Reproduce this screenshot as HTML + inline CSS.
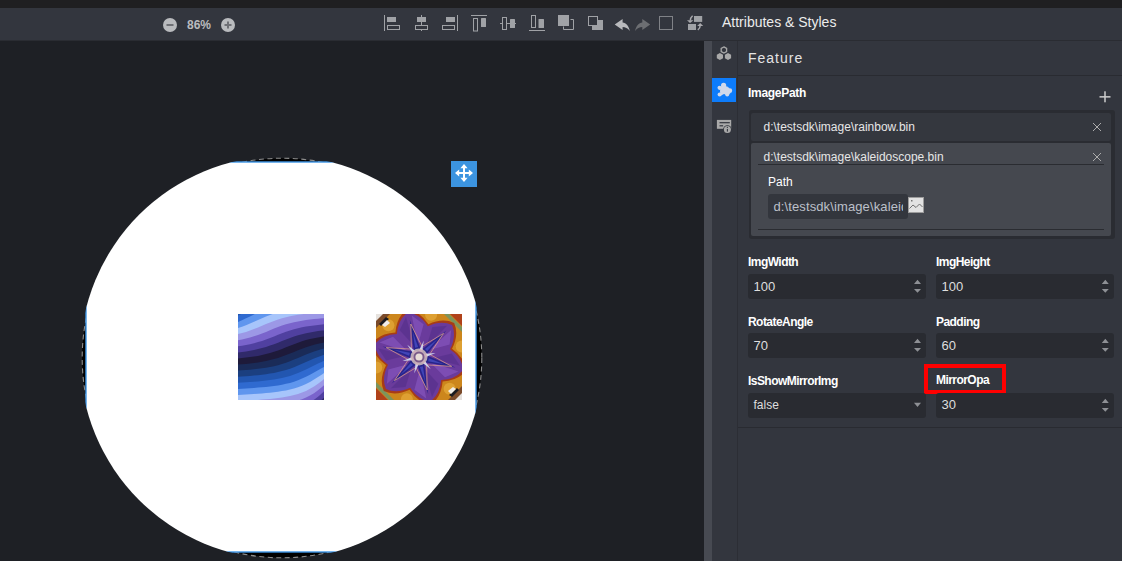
<!DOCTYPE html>
<html><head><meta charset="utf-8">
<style>
*{margin:0;padding:0;box-sizing:border-box}
html,body{width:1122px;height:561px;overflow:hidden;background:#1e2025;font-family:"Liberation Sans",sans-serif}
.abs{position:absolute}
#topbar{left:0;top:0;width:1122px;height:8px;background:#1f1f21}
#toolbar{left:0;top:8px;width:1122px;height:32px;background:#33363e}
#canvas{left:0;top:40px;width:704px;height:521px;background:#1e2025;overflow:hidden}
#sep{left:704px;top:40px;width:8px;height:521px;background:#474a52}
#strip{left:712px;top:40px;width:26px;height:521px;background:#33363e;border-right:1px solid #2c2e35}
#panel{left:738px;top:40px;width:384px;height:521px;background:#33363e}
.t{position:absolute;white-space:nowrap;line-height:1}
svg{position:absolute;overflow:visible}
.lbl{position:absolute;font-size:12px;letter-spacing:-0.55px;font-weight:bold;color:#ffffff;white-space:nowrap;line-height:1}
.inp{position:absolute;height:24.5px;background:#292b31;border-radius:3px}
.inp span{position:absolute;left:5.5px;top:6px;font-size:13px;color:#dedede;line-height:1}
</style></head>
<body>
<div id="topbar" class="abs"></div>
<div id="toolbar" class="abs">
  <!-- zoom controls -->
  <svg style="left:163px;top:10px" width="14" height="14" viewBox="0 0 14 14"><circle cx="7" cy="7" r="7" fill="#b9bbbe"/><rect x="3.5" y="6" width="7" height="2" fill="#6e7075"/></svg>
  <div class="t" style="left:187px;top:11px;font-size:12px;font-weight:bold;color:#b9bbbe">86%</div>
  <svg style="left:221px;top:10px" width="14" height="14" viewBox="0 0 14 14"><circle cx="7" cy="7" r="7" fill="#b9bbbe"/><rect x="3.5" y="6" width="7" height="2" fill="#6e7075"/><rect x="6" y="3.5" width="2" height="7" fill="#6e7075"/></svg>
  <!-- align icons (coords relative to toolbar: y-8) -->
  <svg style="left:0;top:0" width="720" height="32" viewBox="0 0 720 32">
    <g fill="#33363e" stroke="#a0a2a6" stroke-width="1">
      <!-- align left -->
      <line x1="384.5" y1="7" x2="384.5" y2="23"/>
      <rect x="387.5" y="17.5" width="12" height="4"/>
      <!-- align center -->
      <line x1="421.5" y1="7" x2="421.5" y2="23"/>
      <rect x="415.5" y="17.5" width="12" height="4"/>
      <!-- align right -->
      <line x1="457.5" y1="7" x2="457.5" y2="23"/>
      <rect x="442.5" y="17.5" width="12" height="4"/>
      <!-- align top -->
      <line x1="471" y1="7.5" x2="487" y2="7.5"/>
      <rect x="473.5" y="10.5" width="4" height="12.5"/>
      <!-- align middle -->
      <line x1="500" y1="15.5" x2="516" y2="15.5"/>
      <rect x="502.5" y="9.5" width="4" height="12"/>
      <!-- align bottom -->
      <line x1="529" y1="22.5" x2="545" y2="22.5"/>
      <rect x="531.5" y="7.5" width="4" height="12"/>
      <!-- bring front outline L -->
      <path d="M570.5 11.5 H573.5 V21.5 H563.5 V18.5" fill="none"/>
      <!-- send back outline square -->
      <rect x="588.5" y="8.5" width="9" height="9"/>
      
    </g>
    <g fill="#a0a2a6">
      <rect x="387" y="9" width="9" height="5"/>
      <rect x="417" y="9" width="9" height="5"/>
      <rect x="446" y="9" width="9" height="5"/>
      <rect x="481" y="10" width="5" height="9" rx="0.5"/>
      <rect x="510" y="11" width="5" height="9" rx="0.5"/>
      <rect x="538.5" y="11" width="5.5" height="9" rx="0.5"/>
      <rect x="558" y="7" width="11" height="11"/>
      <path d="M592 22 H603 V12 H598 V18 H592 Z"/>
      <!-- swap icon -->
      <rect x="694" y="8" width="8.2" height="5.9"/>
      <rect x="688" y="16" width="8" height="6"/>
    </g>
    <rect x="659.5" y="8.5" width="13" height="13" fill="none" stroke="#808287" stroke-width="1"/>
    <!-- undo -->
    <path d="M614.7 16.4 L622.6 11 V14.5 C626 15 629 18 629.8 23.1 C627.5 20 625.5 19.2 622.6 19.1 V21.9 Z" fill="#b9babd"/>
    <!-- redo -->
    <path d="M650.2 16.4 L642.3 11 V14.5 C638.9 15 635.9 18 635.1 23.1 C637.4 20 639.4 19.2 642.3 19.1 V21.9 Z" fill="#6c6e72"/>
    <!-- swap arrows -->
    <path d="M692.6 7.8 Q690.3 9.8 690.3 12.6" fill="none" stroke="#a9a9ad" stroke-width="1.5"/>
    <path d="M687 12.2 L693.4 12.2 L690 15 Z" fill="#a9a9ad"/>
    <path d="M700.2 17.5 Q700.2 20.3 697.8 21.9" fill="none" stroke="#a9a9ad" stroke-width="1.5"/>
    <path d="M697.2 17.9 L703.2 17.9 L700.2 14.9 Z" fill="#a9a9ad"/>
  </svg>
  <div class="t" style="left:722px;top:7px;font-size:14px;color:#ececec">Attributes &amp; Styles</div>
</div>

<div id="canvas" class="abs">
  <svg style="left:0;top:-40px" width="704" height="561" viewBox="0 0 704 561">
    <defs>
      <clipPath id="mask"><circle cx="281.6" cy="357.4" r="201.6"/></clipPath>
    </defs>
    <circle cx="282" cy="358" r="199.8" fill="#000" stroke="#8c8c8c" stroke-width="1.1" stroke-dasharray="5 3.5"/>
    <g clip-path="url(#mask)"><rect x="86" y="162" width="390" height="390" fill="#fff" stroke="#3d95e6" stroke-width="1.4"/></g>
  </svg>
  <svg style="left:238px;top:274px" width="86" height="86" viewBox="0 0 86 86"><defs><clipPath id="cr"><rect width="86" height="86"/></clipPath></defs><g clip-path="url(#cr)">
<rect width="86" height="86" fill="#1b3f80"/>
<path d="M0 -4.3 L4 -6.9 L8 -9.5 L12 -11.9 L16 -14.1 L20 -16.0 L24 -17.7 L28 -19.1 L32 -20.3 L36 -21.2 L40 -22.0 L44 -22.7 L48 -23.3 L52 -23.7 L56 -24.2 L60 -24.5 L64 -24.9 L68 -25.1 L72 -25.4 L76 -25.7 L80 -25.9 L84 -26.2 L86 -26.3V120H0Z" fill="#2256b0"/>
<path d="M0 1.8 L4 -0.4 L8 -2.6 L12 -4.8 L16 -6.9 L20 -8.9 L24 -10.6 L28 -12.2 L32 -13.5 L36 -14.6 L40 -15.5 L44 -16.3 L48 -16.9 L52 -17.5 L56 -17.9 L60 -18.3 L64 -18.7 L68 -19.0 L72 -19.3 L76 -19.6 L80 -19.8 L84 -20.1 L86 -20.2V120H0Z" fill="#2f6ad0"/>
<path d="M0 7.9 L4 6.2 L8 4.3 L12 2.4 L16 0.4 L20 -1.5 L24 -3.3 L28 -5.0 L32 -6.4 L36 -7.7 L40 -8.7 L44 -9.6 L48 -10.4 L52 -11.1 L56 -11.6 L60 -12.1 L64 -12.5 L68 -12.8 L72 -13.1 L76 -13.4 L80 -13.7 L84 -14.0 L86 -14.1V120H0Z" fill="#5f96ee"/>
<path d="M0 14.0 L4 12.7 L8 11.2 L12 9.5 L16 7.8 L20 6.0 L24 4.2 L28 2.5 L32 0.9 L36 -0.5 L40 -1.8 L44 -2.8 L48 -3.7 L52 -4.5 L56 -5.2 L60 -5.7 L64 -6.2 L68 -6.6 L72 -7.0 L76 -7.3 L80 -7.6 L84 -7.9 L86 -8.0V120H0Z" fill="#a7c5fb"/>
<path d="M0 20.1 L4 19.1 L8 17.9 L12 16.6 L16 15.1 L20 13.5 L24 11.8 L28 10.1 L32 8.5 L36 6.9 L40 5.5 L44 4.3 L48 3.2 L52 2.2 L56 1.4 L60 0.7 L64 0.2 L68 -0.3 L72 -0.8 L76 -1.1 L80 -1.5 L84 -1.8 L86 -1.9V120H0Z" fill="#9c98e6"/>
<path d="M0 26.2 L4 25.4 L8 24.5 L12 23.5 L16 22.3 L20 20.9 L24 19.4 L28 17.9 L32 16.2 L36 14.6 L40 13.1 L44 11.6 L48 10.3 L52 9.2 L56 8.2 L60 7.4 L64 6.7 L68 6.1 L72 5.5 L76 5.1 L80 4.7 L84 4.3 L86 4.2V120H0Z" fill="#7a64cc"/>
<path d="M0 32.3 L4 31.7 L8 31.0 L12 30.2 L16 29.2 L20 28.1 L24 26.9 L28 25.5 L32 24.0 L36 22.4 L40 20.8 L44 19.3 L48 17.8 L52 16.5 L56 15.3 L60 14.2 L64 13.3 L68 12.6 L72 11.9 L76 11.4 L80 10.9 L84 10.5 L86 10.3V120H0Z" fill="#5040a0"/>
<path d="M0 38.4 L4 37.9 L8 37.4 L12 36.7 L16 36.0 L20 35.1 L24 34.1 L28 32.9 L32 31.6 L36 30.2 L40 28.7 L44 27.1 L48 25.5 L52 24.0 L56 22.6 L60 21.3 L64 20.2 L68 19.2 L72 18.4 L76 17.7 L80 17.1 L84 16.6 L86 16.4V120H0Z" fill="#302a6a"/>
<path d="M0 44.5 L4 44.1 L8 43.6 L12 43.1 L16 42.6 L20 41.9 L24 41.1 L28 40.1 L32 39.0 L36 37.8 L40 36.4 L44 34.9 L48 33.3 L52 31.7 L56 30.2 L60 28.7 L64 27.3 L68 26.1 L72 25.1 L76 24.2 L80 23.4 L84 22.7 L86 22.5V120H0Z" fill="#1e1a3a"/>
<path d="M0 50.5 L4 50.2 L8 49.9 L12 49.4 L16 49.0 L20 48.4 L24 47.8 L28 47.0 L32 46.1 L36 45.1 L40 43.9 L44 42.6 L48 41.1 L52 39.5 L56 37.9 L60 36.3 L64 34.7 L68 33.3 L72 31.9 L76 30.8 L80 29.8 L84 28.9 L86 28.5V120H0Z" fill="#1a2b58"/>
<path d="M0 56.6 L4 56.3 L8 56.0 L12 55.7 L16 55.3 L20 54.8 L24 54.3 L28 53.7 L32 53.0 L36 52.2 L40 51.2 L44 50.0 L48 48.7 L52 47.2 L56 45.6 L60 43.9 L64 42.2 L68 40.6 L72 39.0 L76 37.6 L80 36.3 L84 35.1 L86 34.6V120H0Z" fill="#1b3f80"/>
<path d="M0 62.7 L4 62.5 L8 62.2 L12 61.9 L16 61.5 L20 61.2 L24 60.7 L28 60.2 L32 59.6 L36 58.9 L40 58.1 L44 57.1 L48 56.0 L52 54.7 L56 53.2 L60 51.6 L64 49.8 L68 48.0 L72 46.2 L76 44.5 L80 42.9 L84 41.4 L86 40.7V120H0Z" fill="#2256b0"/>
<path d="M0 68.8 L4 68.6 L8 68.3 L12 68.0 L16 67.7 L20 67.4 L24 67.0 L28 66.6 L32 66.1 L36 65.5 L40 64.8 L44 64.0 L48 63.1 L52 61.9 L56 60.6 L60 59.0 L64 57.3 L68 55.5 L72 53.5 L76 51.5 L80 49.5 L84 47.7 L86 46.8V120H0Z" fill="#2f6ad0"/>
<path d="M0 74.9 L4 74.7 L8 74.4 L12 74.2 L16 73.9 L20 73.6 L24 73.2 L28 72.9 L32 72.4 L36 72.0 L40 71.4 L44 70.7 L48 69.8 L52 68.9 L56 67.7 L60 66.3 L64 64.6 L68 62.8 L72 60.8 L76 58.6 L80 56.3 L84 54.0 L86 52.9V120H0Z" fill="#5f96ee"/>
<path d="M0 81.0 L4 80.8 L8 80.5 L12 80.3 L16 80.0 L20 79.7 L24 79.4 L28 79.1 L32 78.7 L36 78.3 L40 77.8 L44 77.1 L48 76.4 L52 75.6 L56 74.5 L60 73.2 L64 71.7 L68 69.9 L72 67.9 L76 65.6 L80 63.0 L84 60.4 L86 59.0V120H0Z" fill="#a7c5fb"/>
<path d="M0 87.1 L4 86.9 L8 86.6 L12 86.4 L16 86.1 L20 85.9 L24 85.6 L28 85.3 L32 84.9 L36 84.5 L40 84.0 L44 83.5 L48 82.8 L52 82.1 L56 81.1 L60 80.0 L64 78.6 L68 76.9 L72 74.8 L76 72.4 L80 69.7 L84 66.7 L86 65.1V120H0Z" fill="#9c98e6"/>
<path d="M0 93.2 L4 93.0 L8 92.7 L12 92.5 L16 92.2 L20 92.0 L24 91.7 L28 91.4 L32 91.1 L36 90.7 L40 90.3 L44 89.8 L48 89.2 L52 88.4 L56 87.6 L60 86.5 L64 85.2 L68 83.6 L72 81.6 L76 79.2 L80 76.3 L84 73.0 L86 71.2V120H0Z" fill="#7a64cc"/>
<path d="M0 99.3 L4 99.1 L8 98.8 L12 98.6 L16 98.4 L20 98.1 L24 97.8 L28 97.5 L32 97.2 L36 96.9 L40 96.4 L44 96.0 L48 95.4 L52 94.7 L56 93.9 L60 92.9 L64 91.6 L68 90.1 L72 88.1 L76 85.7 L80 82.8 L84 79.3 L86 77.3V120H0Z" fill="#5040a0"/>
<path d="M0 105.4 L4 105.1 L8 104.9 L12 104.7 L16 104.4 L20 104.2 L24 103.9 L28 103.6 L32 103.3 L36 103.0 L40 102.6 L44 102.1 L48 101.6 L52 100.9 L56 100.2 L60 99.2 L64 98.0 L68 96.5 L72 94.6 L76 92.2 L80 89.2 L84 85.5 L86 83.4V120H0Z" fill="#302a6a"/>
</g></svg>
  <svg style="left:376px;top:274px" width="86" height="86" viewBox="0 0 86 86"><defs><clipPath id="ck"><rect width="86" height="86"/></clipPath></defs><g clip-path="url(#ck)">
<rect width="86" height="86" fill="#cc861c"/>
<circle cx="85.7" cy="32.4" r="6" fill="#dea032"/>
<circle cx="73.6" cy="74.7" r="6" fill="#dea032"/>
<circle cx="30.9" cy="85.3" r="6" fill="#dea032"/>
<circle cx="0.3" cy="53.6" r="6" fill="#dea032"/>
<circle cx="12.4" cy="11.3" r="6" fill="#dea032"/>
<circle cx="55.1" cy="0.7" r="6" fill="#dea032"/>
<path d="M0 0 H14 L0 14Z" fill="#7a4a2a"/>
<path d="M0 0 H7 L0 7Z" fill="#e6e2de"/><path d="M3 10 L10 3 L13 5 L5 12Z" fill="#1a1a20"/><path d="M6 11 L11 6 L14 9 L9 13Z" fill="#f0ece8"/>
<path d="M86 86 H72 L86 72Z" fill="#7a4a2a"/>
<path d="M86 86 H79 L86 79Z" fill="#e6e2de"/><path d="M83 76 L76 83 L73 81 L81 74Z" fill="#1a1a20"/><path d="M80 75 L75 80 L72 77 L77 73Z" fill="#f0ece8"/>
<path d="M86 0 H74 L86 12Z" fill="#b0421a"/><path d="M0 86 H12 L0 74Z" fill="#b0421a"/>
<path d="M68 0 H73 L86 13 V18Z" fill="#5a9a78" opacity="0.7"/><path d="M18 86 H13 L0 73 V68Z" fill="#5a9a78" opacity="0.7"/>
<path d="M52.4 10.3 Q66.7 3.6 78.2 9.0 Q83.2 20.7 76.0 34.8 Q89.0 43.8 90.1 56.5 Q82.4 66.7 66.6 67.5 Q65.3 83.2 54.9 90.5 Q42.2 89.0 33.6 75.7 Q19.3 82.4 7.8 77.0 Q2.8 65.3 10.0 51.2 Q-3.0 42.2 -4.1 29.5 Q3.6 19.3 19.4 18.5 Q20.7 2.8 31.1 -4.5 Q43.8 -3.0 52.4 10.3Z" fill="#a83c16"/>
<path d="M51.8 12.2 Q65.2 6.0 76.1 11.0 Q80.8 22.1 74.0 35.3 Q86.2 43.8 87.2 55.7 Q80.0 65.2 65.2 66.0 Q63.9 80.8 54.1 87.6 Q42.2 86.2 34.2 73.8 Q20.8 80.0 9.9 75.0 Q5.2 63.9 12.0 50.7 Q-0.2 42.2 -1.2 30.3 Q6.0 20.8 20.8 20.0 Q22.1 5.2 31.9 -1.6 Q43.8 -0.2 51.8 12.2Z" fill="#6a3b9c"/>
<path d="M54.9 35.6 L73.6 30.6 L75.2 16.0 L60.3 29.5Z" fill="#8656bd" opacity="0.7"/>
<path d="M50.8 31.4 L56.4 12.9 L71.1 11.8 L57.1 26.1Z" fill="#57318c" opacity="0.7"/>
<path d="M55.4 49.6 L69.0 63.3 L82.5 57.4 L63.4 51.2Z" fill="#8656bd" opacity="0.7"/>
<path d="M57.0 44.0 L75.8 39.6 L84.1 51.7 L64.7 46.8Z" fill="#57318c" opacity="0.7"/>
<path d="M43.5 57.0 L38.4 75.7 L50.3 84.4 L46.1 64.8Z" fill="#8656bd" opacity="0.7"/>
<path d="M49.1 55.6 L62.4 69.7 L56.0 82.9 L50.5 63.7Z" fill="#57318c" opacity="0.7"/>
<path d="M31.1 50.4 L12.4 55.4 L10.8 70.0 L25.7 56.5Z" fill="#8656bd" opacity="0.7"/>
<path d="M35.2 54.6 L29.6 73.1 L14.9 74.2 L28.9 59.9Z" fill="#57318c" opacity="0.7"/>
<path d="M30.6 36.4 L17.0 22.7 L3.5 28.6 L22.6 34.8Z" fill="#8656bd" opacity="0.7"/>
<path d="M29.0 42.0 L10.2 46.4 L1.9 34.3 L21.3 39.2Z" fill="#57318c" opacity="0.7"/>
<path d="M42.5 29.0 L47.6 10.3 L35.7 1.6 L39.9 21.2Z" fill="#8656bd" opacity="0.7"/>
<path d="M36.9 30.4 L23.6 16.3 L30.0 3.1 L35.5 22.3Z" fill="#57318c" opacity="0.7"/>
<path d="M46.7 34.8 L70.3 16.6 L51.3 39.6 L46.6 39.5Z" fill="#27248a"/>
<path d="M49.0 35.0 L61.7 24.9 L51.2 37.3Z" fill="#4244b8"/>
<path d="M52.0 42.1 L79.5 53.5 L50.1 48.5 L47.8 44.4Z" fill="#27248a"/>
<path d="M52.9 44.2 L68.0 50.2 L52.1 47.2Z" fill="#4244b8"/>
<path d="M48.3 50.3 L52.2 79.9 L41.7 51.9 L44.2 47.9Z" fill="#27248a"/>
<path d="M46.9 52.2 L49.3 68.2 L43.9 53.0Z" fill="#4244b8"/>
<path d="M39.3 51.2 L15.7 69.4 L34.7 46.4 L39.4 46.5Z" fill="#27248a"/>
<path d="M37.0 51.0 L24.3 61.1 L34.8 48.7Z" fill="#4244b8"/>
<path d="M34.0 43.9 L6.5 32.5 L35.9 37.5 L38.2 41.6Z" fill="#27248a"/>
<path d="M33.1 41.8 L18.0 35.8 L33.9 38.8Z" fill="#4244b8"/>
<path d="M37.7 35.7 L33.8 6.1 L44.3 34.1 L41.8 38.1Z" fill="#27248a"/>
<path d="M39.1 33.8 L36.7 17.8 L42.1 33.0Z" fill="#4244b8"/>
<path d="M46.0 32.4 L67.5 19.4 L53.7 40.3" fill="none" stroke="#e8a888" stroke-width="0.8" opacity="0.85"/>
<path d="M53.7 40.3 L75.7 52.4 L50.6 50.9" fill="none" stroke="#e8a888" stroke-width="0.8" opacity="0.85"/>
<path d="M50.6 50.9 L51.2 76.0 L40.0 53.6" fill="none" stroke="#e8a888" stroke-width="0.8" opacity="0.85"/>
<path d="M40.0 53.6 L18.5 66.6 L32.3 45.7" fill="none" stroke="#e8a888" stroke-width="0.8" opacity="0.85"/>
<path d="M32.3 45.7 L10.3 33.6 L35.4 35.1" fill="none" stroke="#e8a888" stroke-width="0.8" opacity="0.85"/>
<path d="M35.4 35.1 L34.8 10.0 L46.0 32.4" fill="none" stroke="#e8a888" stroke-width="0.8" opacity="0.85"/>
<path d="M50.3 39.7 L59.5 38.9 L51.0 42.4Z" fill="#cdd3ec"/>
<path d="M49.5 47.7 L54.8 55.2 L47.5 49.6Z" fill="#cdd3ec"/>
<path d="M42.2 51.0 L38.3 59.3 L39.5 50.2Z" fill="#cdd3ec"/>
<path d="M35.7 46.3 L26.5 47.1 L35.0 43.6Z" fill="#cdd3ec"/>
<path d="M36.5 38.3 L31.2 30.8 L38.5 36.4Z" fill="#cdd3ec"/>
<path d="M43.8 35.0 L47.7 26.7 L46.5 35.8Z" fill="#cdd3ec"/>
<circle cx="43" cy="43" r="8.5" fill="#f6e0c8" opacity="0.7"/>
<circle cx="43" cy="43" r="5.5" fill="#7a5a8a"/>
<circle cx="43" cy="43" r="3.6" fill="#e8dcd8"/>
</g></svg>
  <!-- move handle -->
  <svg style="left:451px;top:121px" width="26" height="26" viewBox="0 0 26 26">
    <rect x="0" y="0" width="26" height="26" fill="#3c94e0"/>
    <g fill="#fff">
      <rect x="12" y="5" width="2" height="15"/>
      <rect x="5" y="11" width="16" height="2"/>
      <path d="M13 3 L16.6 7.2 H9.4 Z"/>
      <path d="M13 21 L16.6 16.8 H9.4 Z"/>
      <path d="M4 12 L8.2 8.4 V15.6 Z"/>
      <path d="M22 12 L17.8 8.4 V15.6 Z"/>
    </g>
  </svg>
</div>
<div id="sep" class="abs"></div>
<div class="abs" style="left:0;top:40px;width:1122px;height:1px;background:#2a2c32;z-index:5"></div>
<div id="strip" class="abs">
  <svg style="left:0;top:0" width="26" height="110" viewBox="0 0 26 110">
    <path d="M11.9 6.9 L14.6 8.45 V11.55 L11.9 13.1 L9.2 11.55 V8.45 Z" fill="none" stroke="#a9a9a9" stroke-width="1.3"/>
    <path d="M7.9 12.9 L11 14.7 V18.3 L7.9 20.1 L4.8 18.3 V14.7 Z" fill="#a9a9a9"/>
    <path d="M16 12.9 L19.1 14.7 V18.3 L16 20.1 L12.9 18.3 V14.7 Z" fill="#a9a9a9"/>
    <rect x="0" y="38" width="24" height="24" fill="#0d7cfb"/>
    <g fill="#cfd8ea">
      <path d="M8.3 47 L17 47.5 L18.5 53 L16 55.5 L12 54 L9 55.5 L8 52 Z"/>
      <circle cx="11.6" cy="45.4" r="2.6"/>
      <circle cx="7.6" cy="47.8" r="2.1"/>
      <circle cx="17.8" cy="50.7" r="2.4"/>
      <circle cx="7.6" cy="54.6" r="2"/>
      <circle cx="15.2" cy="54.6" r="2"/>
      <path d="M10 46 L15.5 46.5 L16 48 L9 48 Z"/>
    </g>
    <rect x="4.9" y="79.9" width="14.3" height="8.9" fill="#a9a9a9"/>
    <rect x="7.5" y="82.1" width="10.3" height="1.2" fill="#33363e"/>
    <rect x="7.5" y="85.2" width="3.6" height="1.2" fill="#33363e"/>
    <circle cx="15.4" cy="89.5" r="4.3" fill="#33363e"/>
    <circle cx="15.4" cy="89.5" r="3.5" fill="#a9a9a9"/>
    <rect x="14.85" y="88.9" width="1.1" height="2.7" fill="#33363e"/>
    <rect x="14.85" y="86.8" width="1.1" height="1.1" fill="#33363e"/>
  </svg>
</div>
<div id="panel" class="abs">
  <div class="abs" style="left:0;top:35px;width:384px;height:1px;background:#292b31"></div>
  <div class="t" style="left:10px;top:11.4px;font-size:14px;color:#e4e4e4;letter-spacing:1px">Feature</div>
  <div class="lbl" style="left:10px;top:47.1px;letter-spacing:-0.3px">ImagePath</div>
  <svg style="left:361px;top:51px" width="12" height="12" viewBox="0 0 12 12"><rect x="0.5" y="5.1" width="11" height="1.5" fill="#cdcdcd"/><rect x="5.25" y="0.3" width="1.5" height="11" fill="#cdcdcd"/></svg>
  <!-- list container -->
  <div class="abs" style="left:10.5px;top:70px;width:366px;height:129px;background:#2a2c32;border-radius:3px"></div>
  <div class="abs" style="left:13px;top:73px;width:360px;height:27.5px;background:#34373e;border-radius:2px"></div>
  <div class="t" style="left:25.5px;top:81px;font-size:12px;color:#e6e6e6">d:\testsdk\image\rainbow.bin</div>
  <svg style="left:355px;top:83px" width="8" height="8" viewBox="0 0 8 8"><path d="M0 0 L8 8 M8 0 L0 8" stroke="#acacac" stroke-width="1"/></svg>
  <div class="abs" style="left:13px;top:103px;width:360px;height:93px;background:#45484f;border-radius:2px"></div>
  <div class="t" style="left:25.5px;top:110.6px;font-size:12px;color:#e6e6e6">d:\testsdk\image\kaleidoscope.bin</div>
  <svg style="left:355px;top:113px" width="8" height="8" viewBox="0 0 8 8"><path d="M0 0 L8 8 M8 0 L0 8" stroke="#acacac" stroke-width="1"/></svg>
  <div class="abs" style="left:20px;top:124px;width:346px;height:1px;background:#2a2c31"></div>
  <div class="t" style="left:30px;top:135.9px;font-size:12px;color:#ffffff">Path</div>
  <div class="abs" style="left:30px;top:154px;width:140px;height:25px;background:#33363d;border-radius:3px">
    <div class="abs" style="left:5.4px;top:0;width:129.2px;height:25px;overflow:hidden"><div class="t" style="left:0;top:5.9px;font-size:13px;letter-spacing:0.12px;color:#bcc0ca">d:\testsdk\image\kaleidoscope.bin</div></div>
  </div>
  <svg style="left:170px;top:157px" width="16" height="16" viewBox="0 0 16 16"><rect x="0.5" y="0.5" width="15" height="15" fill="#e2e2e2" stroke="#9c9c9c"/><path d="M1.5 11.5 L5 8 L8 10.5 L11.5 7 L14.5 10" fill="none" stroke="#707070" stroke-width="1"/><rect x="3" y="3" width="1.5" height="1.5" fill="#777"/></svg>
  <div class="abs" style="left:20px;top:188.5px;width:346px;height:1px;background:#2a2c31"></div>

  <div class="lbl" style="left:10px;top:216.1px">ImgWidth</div>
  <div class="lbl" style="left:198px;top:216.1px">ImgHeight</div>
  <div class="inp" style="left:10px;top:234px;width:177.5px"><span style="top:5.9px">100</span></div>
  <div class="inp" style="left:198px;top:234px;width:177.5px"><span style="top:5.9px">100</span></div>
  <div class="lbl" style="left:10px;top:275.6px">RotateAngle</div>
  <div class="lbl" style="left:198px;top:275.6px">Padding</div>
  <div class="inp" style="left:10px;top:293px;width:177.5px"><span style="top:6.2px">70</span></div>
  <div class="inp" style="left:198px;top:293px;width:177.5px"><span style="top:6.2px">60</span></div>
  <div class="lbl" style="left:10px;top:335.4px">IsShowMirrorImg</div>
  <div class="lbl" style="left:198px;top:333.9px">MirrorOpa</div>
  <div class="abs" style="left:186px;top:324px;width:82px;height:30px;border:4px solid #ff0000"></div>
  <div class="inp" style="left:10px;top:353px;width:177.5px"><span style="top:5.6px;font-size:12px">false</span></div>
  <div class="inp" style="left:198px;top:353px;width:177.5px"><span style="top:4.8px">30</span></div>
  <svg style="left:0;top:0" width="384" height="400" viewBox="0 0 384 400">
    <g fill="#8e9095">
      <path d="M176.0 244.00 L179.5 239.75 L183.0 244.00 Z M176.0 249.00 L179.5 252.75 L183.0 249.00 Z"/>
      <path d="M363.8 244.00 L367.3 239.75 L370.8 244.00 Z M363.8 249.00 L367.3 252.75 L370.8 249.00 Z"/>
      <path d="M176.0 303.00 L179.5 298.75 L183.0 303.00 Z M176.0 308.00 L179.5 311.75 L183.0 308.00 Z"/>
      <path d="M363.8 303.00 L367.3 298.75 L370.8 303.00 Z M363.8 308.00 L367.3 311.75 L370.8 308.00 Z"/>
      <path d="M363.8 363.00 L367.3 358.75 L370.8 363.00 Z M363.8 368.00 L367.3 371.75 L370.8 368.00 Z"/>
      <path d="M176 362.7 L183 362.7 L179.5 366.9 Z"/>
    </g>
  </svg>
  <div class="abs" style="left:0;top:387px;width:384px;height:1px;background:#292b31"></div>
</div>
</body></html>
